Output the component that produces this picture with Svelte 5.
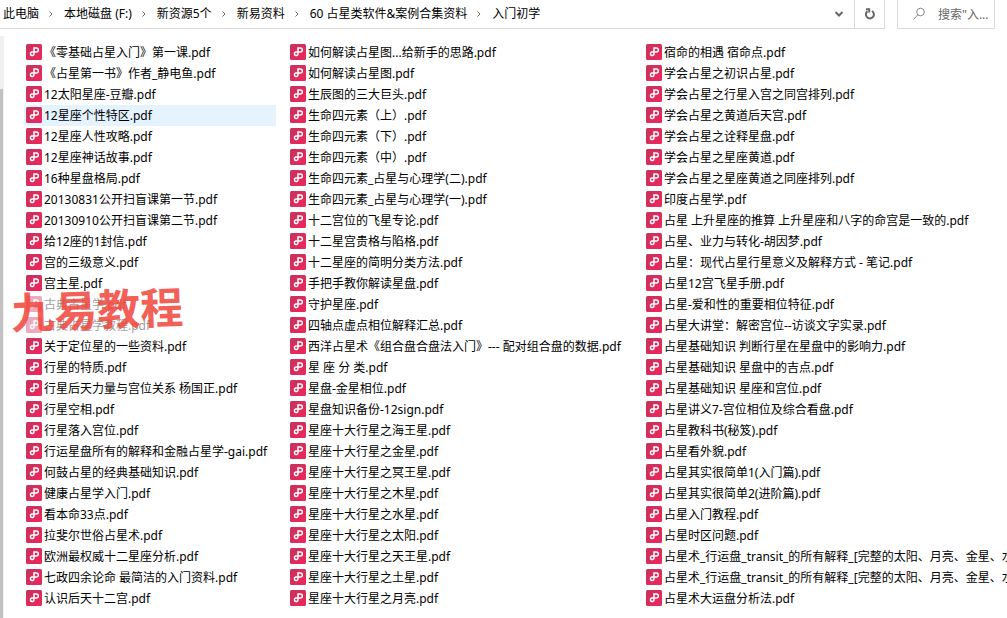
<script>
  const crumbs = ['此电脑', '本地磁盘 (F:)', '新资源5个', '新易资料', '60 占星类软件&案例合集资料', '入门初学'];

  const columns = [
    [
      '《零基础占星入门》第一课', '《占星第一书》作者_静电鱼', '12太阳星座-豆瓣', '12星座个性特区', '12星座人性攻略',
      '12星座神话故事', '16种星盘格局', '20130831公开扫盲课第一节', '20130910公开扫盲课第二节', '给12座的1封信',
      '宫的三级意义', '宫主星', '古典占星学', '古典占星学教程', '关于定位星的一些资料', '行星的特质',
      '行星后天力量与宫位关系 杨国正', '行星空相', '行星落入宫位', '行运星盘所有的解释和金融占星学-gai',
      '何鼓占星的经典基础知识', '健康占星学入门', '看本命33点', '拉斐尔世俗占星术', '欧洲最权威十二星座分析',
      '七政四余论命 最简洁的入门资料', '认识后天十二宫'
    ],
    [
      '如何解读占星图...给新手的思路', '如何解读占星图', '生辰图的三大巨头', '生命四元素（上）', '生命四元素（下）',
      '生命四元素（中）', '生命四元素_占星与心理学(二)', '生命四元素_占星与心理学(一)', '十二宫位的飞星专论',
      '十二星宫贵格与陷格', '十二星座的简明分类方法', '手把手教你解读星盘', '守护星座', '四轴点虚点相位解释汇总',
      '西洋占星术《组合盘合盘法入门》--- 配对组合盘的数据', '星 座 分 类', '星盘-金星相位', '星盘知识备份-12sign',
      '星座十大行星之海王星', '星座十大行星之金星', '星座十大行星之冥王星', '星座十大行星之木星', '星座十大行星之水星',
      '星座十大行星之太阳', '星座十大行星之天王星', '星座十大行星之土星', '星座十大行星之月亮'
    ],
    [
      '宿命的相遇 宿命点', '学会占星之初识占星', '学会占星之行星入宫之同宫排列', '学会占星之黄道后天宫', '学会占星之诠释星盘',
      '学会占星之星座黄道', '学会占星之星座黄道之同座排列', '印度占星学', '占星 上升星座的推算 上升星座和八字的命宫是一致的',
      '占星、业力与转化-胡因梦', '占星：现代占星行星意义及解释方式 - 笔记', '占星12宫飞星手册', '占星-爱和性的重要相位特征',
      '占星大讲堂：解密宫位--访谈文字实录', '占星基础知识 判断行星在星盘中的影响力', '占星基础知识 星盘中的吉点',
      '占星基础知识 星座和宫位', '占星讲义7-宫位相位及综合看盘', '占星教科书(秘笈)', '占星看外貌', '占星其实很简单1(入门篇)',
      '占星其实很简单2(进阶篇)', '占星入门教程', '占星时区问题', '占星术_行运盘_transit_的所有解释_[完整的太阳、月亮、金星、水星',
      '占星术_行运盘_transit_的所有解释_[完整的太阳、月亮、金星、水星', '占星术大运盘分析法'
    ]
  ];

  const selected = '12星座个性特区';
  const faded = ['古典占星学', '古典占星学教程'];
</script>

<div class="window">
  <svg class="defs" aria-hidden="true">
    <linearGradient id="pdf-red" x1="0" y1="0" x2="1" y2="1">
      <stop offset="0" stop-color="#c4335c" />
      <stop offset="1" stop-color="#f0265c" />
    </linearGradient>
  </svg>
  <header>
    <nav class="address" aria-label="地址">
      <ol>
        {#each crumbs as crumb, i}
          <li>
            {#if i > 0}
              <svg class="sep" viewBox="0 0 6 8" aria-hidden="true"><path d="M1.5 1.5 4 4 1.5 6.5" /></svg>
            {/if}
            <a href="#top">{crumb}</a>
          </li>
        {/each}
      </ol>
      <button class="history" aria-label="历史记录">
        <svg viewBox="0 0 12 12" aria-hidden="true"><path d="M2.5 4 6 7.5 9.5 4" /></svg>
      </button>
      <button class="refresh" aria-label="刷新">
        <svg viewBox="0 0 12 12" aria-hidden="true"><path d="M8 3A4 4 0 1 1 3.5 3.2" /><path d="M2 1.2H5.2V4.6" /></svg>
      </button>
    </nav>
    <label class="search">
      <svg viewBox="0 0 14 14" aria-hidden="true"><circle cx="8.5" cy="5" r="3.8" /><path d="M5.8 7.8 1.5 12.5" /></svg>
      <input type="text" aria-label="搜索" placeholder={'搜索"入...'} />
    </label>
  </header>

  <div class="body">
    <div class="scroll"><div class="thumb"></div></div>
    <main>
      {#each columns as column}
        <ul>
          {#each column as name}
            <li class:selected={name === selected} class:faded={faded.includes(name)}>
              <svg class="pdf" viewBox="0 0 16 16" aria-hidden="true">
                <rect width="16" height="16" rx="1.5" />
                <path d="M8 9.4V4H10.3A2 2 0 0 1 10.3 8H5.6A1.8 1.8 0 1 0 8 9.4" />
              </svg>
              <span>{name}.pdf</span>
            </li>
          {/each}
        </ul>
      {/each}
    </main>
    <div class="watermark">九易教程</div>
  </div>
</div>

<style>
  :global(body) {
    margin: 0;
    background: #fff;
  }
  .window {
    height: 100vh;
    overflow: hidden;
    display: flex;
    flex-direction: column;
    font: 12px/21px 'Noto Sans', 'Noto Sans CJK SC', sans-serif;
    color: #000;
  }
  .defs {
    position: absolute;
    width: 0;
    height: 0;
  }
  header {
    display: flex;
    gap: 12px;
    height: 29px;
    flex: none;
    padding-right: 12px;
    box-sizing: border-box;
  }
  .address {
    flex: 1;
    display: flex;
    border: solid #d9d9d9;
    border-width: 0 1px 1px 0;
  }
  ol, ul {
    list-style: none;
    margin: 0;
    padding: 0;
  }
  ol {
    flex: 1;
    display: flex;
    padding-left: 3px;
  }
  ol li {
    display: flex;
    align-items: center;
    white-space: nowrap;
  }
  ol a {
    color: inherit;
    text-decoration: none;
    line-height: 28px;
  }
  svg {
    fill: none;
    stroke: #666;
    flex: none;
  }
  .sep {
    width: 6px;
    height: 8px;
    margin: 0 10px 0 9px;
  }
  button {
    border: 0;
    padding: 0;
    background: none;
    display: grid;
    place-items: center;
    width: 30px;
  }
  button svg {
    width: 12px;
    height: 12px;
    stroke-width: 2;
  }
  .refresh {
    border-left: 1px solid #d9d9d9;
  }
  .search {
    width: 98px;
    box-sizing: border-box;
    display: flex;
    align-items: center;
    gap: 12px;
    padding-left: 14px;
    border: solid #d9d9d9;
    border-width: 0 1px 1px;
  }
  .search svg {
    width: 14px;
    height: 14px;
    stroke: #888;
  }
  input {
    flex: 1;
    min-width: 0;
    border: 0;
    padding: 0;
    background: none;
    outline: none;
    font: inherit;
  }
  input::placeholder {
    color: #666;
  }
  .body {
    flex: 1;
    min-height: 0;
    display: flex;
    position: relative;
  }
  .scroll {
    width: 4px;
    flex: none;
    margin-top: 7px;
    padding-top: 53px;
    background: #f0f0f0;
    display: flex;
  }
  .thumb {
    width: 3px;
    background: #c2c2c2;
  }
  main {
    flex: 1;
    min-width: 0;
    overflow: hidden;
    display: grid;
    grid-template-columns: 252px 344px 1fr;
    column-gap: 12px;
    align-content: start;
    padding: 13px 0 0 20px;
  }
  ul li {
    display: flex;
    align-items: center;
    gap: 2px;
    height: 21px;
    padding-left: 2px;
    white-space: pre;
  }
  .selected {
    background: #e5f3ff;
  }
  .faded {
    opacity: 0.4;
  }
  .pdf {
    width: 16px;
    height: 16px;
    margin-bottom: 2px;
    stroke: #fff;
    stroke-width: 1.5;
  }
  .pdf rect {
    fill: url(#pdf-red);
    stroke: none;
  }
  .watermark {
    position: absolute;
    left: 11px;
    top: 248px;
    font: 700 43px/60px 'Noto Sans CJK SC', sans-serif;
    color: #f0453a;
    opacity: 0.85;
    transform: rotate(-2deg);
    white-space: nowrap;
  }
</style>
